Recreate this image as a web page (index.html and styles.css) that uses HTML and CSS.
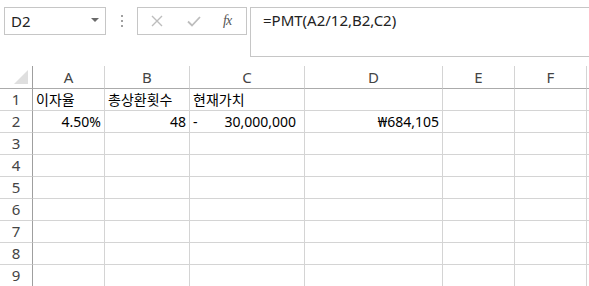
FILE: index.html
```html
<!DOCTYPE html>
<html lang="ko">
  <head>
    <meta charset="UTF-8">
    <title>PMT</title>
    <link rel="stylesheet" href="styles.css">
  </head>
  <body>
    <div class="formula-bar">
      <div class="name-box">
        <span class="name-ref">D2</span>
        <span class="name-arrow"></span>
      </div>
      <div class="grip">
        <span></span><span></span><span></span>
      </div>
      <div class="bar-buttons">
        <svg class="btn-icon" width="12" height="12" viewBox="0 0 12 12">
          <path d="M1 1 L11 11 M11 1 L1 11" stroke="#bdbdbd" stroke-width="1.4" fill="none"/>
        </svg>
        <svg class="btn-icon" width="14" height="11" viewBox="0 0 14 11">
          <path d="M1 5.5 L5 9.5 L13 1" stroke="#bdbdbd" stroke-width="1.8" fill="none"/>
        </svg>
        <span class="fx">fx</span>
      </div>
      <div class="formula-input">=PMT(A2/12,B2,C2)</div>
    </div>

    <table class="sheet">
      <colgroup>
        <col class="col-gutter">
        <col class="col-a">
        <col class="col-b">
        <col class="col-c">
        <col class="col-d">
        <col class="col-e">
        <col class="col-f">
        <col>
      </colgroup>
      <thead>
        <tr>
          <th class="corner"><span class="corner-mark"></span></th>
          <th>A</th><th>B</th><th>C</th><th>D</th><th>E</th><th>F</th><th></th>
        </tr>
      </thead>
      <tbody>
        <tr>
          <th>1</th>
          <td>이자율</td><td>총상환횟수</td><td>현재가치</td><td></td><td></td><td></td><td></td>
        </tr>
        <tr>
          <th>2</th>
          <td class="num">4.50%</td>
          <td class="num">48</td>
          <td class="acct"><span class="acct-sign">-</span><span class="acct-value">30,000,000</span></td>
          <td class="num">₩684,105</td>
          <td></td><td></td><td></td>
        </tr>
        <tr><th>3</th><td></td><td></td><td></td><td></td><td></td><td></td><td></td></tr>
        <tr><th>4</th><td></td><td></td><td></td><td></td><td></td><td></td><td></td></tr>
        <tr><th>5</th><td></td><td></td><td></td><td></td><td></td><td></td><td></td></tr>
        <tr><th>6</th><td></td><td></td><td></td><td></td><td></td><td></td><td></td></tr>
        <tr><th>7</th><td></td><td></td><td></td><td></td><td></td><td></td><td></td></tr>
        <tr><th>8</th><td></td><td></td><td></td><td></td><td></td><td></td><td></td></tr>
        <tr><th>9</th><td></td><td></td><td></td><td></td><td></td><td></td><td></td></tr>
      </tbody>
    </table>
  </body>
</html>
```

FILE: styles.css
```css
:root {
  --grid-line: #d4d4d4;
  --header-line: #ababab;
  --box-line: #c6c6c6;
  --header-text: #444444;
}

body {
  margin: 0;
  background: #ffffff;
  color: #000000;
  font-family: "Noto Sans", "Noto Sans CJK KR", sans-serif;
  font-size: 14px;
  overflow: hidden;
}

/* formula bar */

.formula-bar {
  display: flex;
  align-items: flex-start;
  height: 66px;
  padding: 7px 0 0 4px;
  box-sizing: border-box;
}

.name-box {
  width: 102px;
  height: 28px;
  box-sizing: border-box;
  border: 1px solid var(--box-line);
  display: flex;
  align-items: center;
  justify-content: space-between;
  padding: 0 6px 0 6px;
}

.name-ref {
  font-size: 15px;
  color: #222;
}

.name-arrow {
  width: 0;
  height: 0;
  border-left: 4px solid transparent;
  border-right: 4px solid transparent;
  border-top: 4px solid #6a6a6a;
  margin-top: -2px;
}

.grip {
  width: 31px;
  height: 28px;
  display: flex;
  flex-direction: column;
  align-items: center;
  justify-content: center;
  gap: 3px;
}

.grip span {
  width: 2px;
  height: 2px;
  background: #a0a0a0;
}

.bar-buttons {
  width: 110px;
  height: 28px;
  box-sizing: border-box;
  border: 1px solid var(--box-line);
  display: flex;
  align-items: center;
  padding: 0 0 0 13px;
  gap: 24px;
}

.fx {
  font-family: "Liberation Serif", serif;
  font-style: italic;
  font-size: 14px;
  color: #555;
  letter-spacing: -1px;
  margin-left: -2px;
}

.formula-input {
  flex: 1;
  height: 50px;
  margin-left: 3px;
  margin-right: -4px;
  box-sizing: border-box;
  border: 1px solid var(--box-line);
  padding: 2px 0 0 12px;
  font-size: 15px;
  color: #222;
}

/* sheet */

.sheet {
  border-collapse: separate;
  border-spacing: 0;
  table-layout: fixed;
  width: 600px;
}

.col-gutter { width: 33px; }
.col-a { width: 72px; }
.col-b { width: 85px; }
.col-c { width: 115px; }
.col-d { width: 138px; }
.col-e { width: 72px; }
.col-f { width: 72px; }

.sheet th,
.sheet td {
  height: 21px;
  padding: 0 3px;
  border-right: 1px solid var(--grid-line);
  border-bottom: 1px solid var(--grid-line);
  white-space: nowrap;
  overflow: hidden;
  line-height: 21px;
}

.sheet thead th {
  height: 22px;
  font-weight: normal;
  color: var(--header-text);
  text-align: center;
  border-bottom-color: var(--header-line);
  font-size: 15px;
}

.sheet tbody th {
  font-weight: normal;
  color: var(--header-text);
  text-align: center;
  border-right-color: #9f9f9f;
  font-size: 15px;
}

.sheet thead th.corner {
  border-right-color: #9f9f9f;
  position: relative;
}

.corner-mark {
  position: absolute;
  right: 4px;
  bottom: 4px;
  width: 0;
  height: 0;
  border-left: 14px solid transparent;
  border-bottom: 14px solid #dfdfdf;
}

.sheet .num {
  text-align: right;
}

.sheet .acct {
  padding-right: 8px;
}

.acct-sign {
  float: left;
}

.acct-value {
  float: right;
}
```
